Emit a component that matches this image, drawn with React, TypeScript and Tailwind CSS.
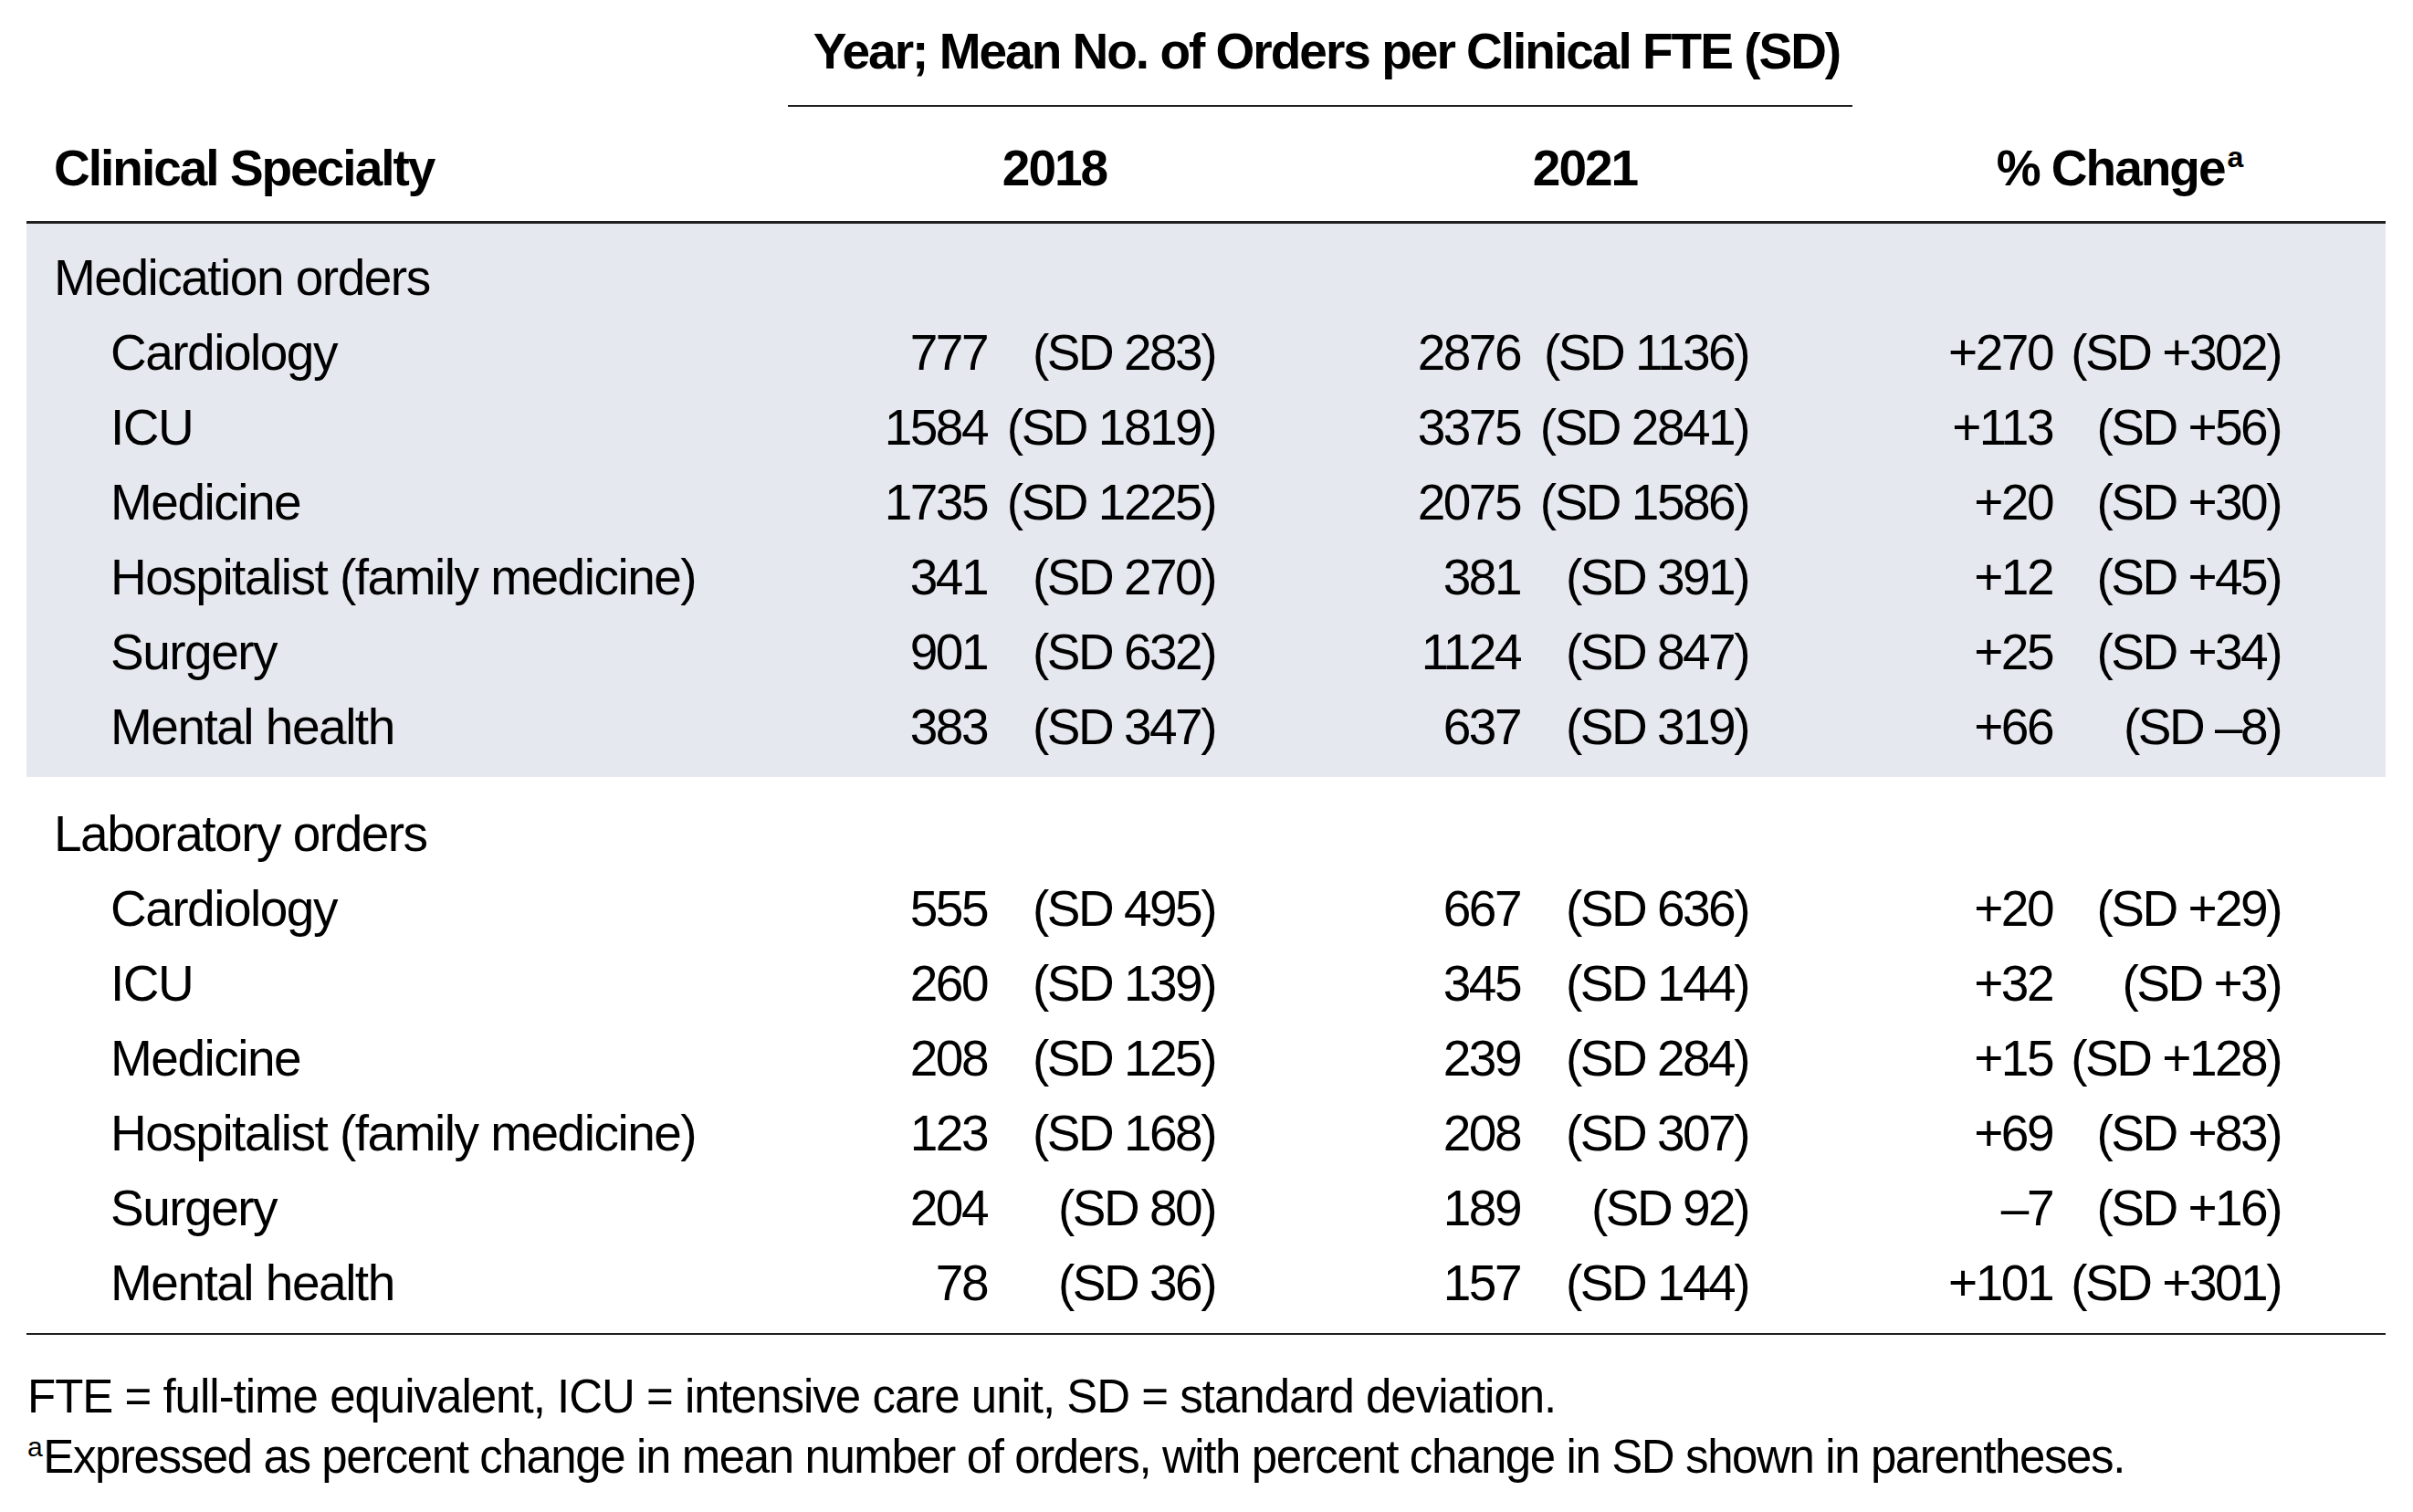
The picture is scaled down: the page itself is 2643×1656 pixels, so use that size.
import React from "react";

type Row = [string, string, string, string, string, string, string];

const med: Row[] = [
  ["Cardiology", "777", "(SD 283)", "2876", "(SD 1136)", "+270", "(SD +302)"],
  ["ICU", "1584", "(SD 1819)", "3375", "(SD 2841)", "+113", "(SD +56)"],
  ["Medicine", "1735", "(SD 1225)", "2075", "(SD 1586)", "+20", "(SD +30)"],
  ["Hospitalist (family medicine)", "341", "(SD 270)", "381", "(SD 391)", "+12", "(SD +45)"],
  ["Surgery", "901", "(SD 632)", "1124", "(SD 847)", "+25", "(SD +34)"],
  ["Mental health", "383", "(SD 347)", "637", "(SD 319)", "+66", "(SD \u20138)"],
];

const lab: Row[] = [
  ["Cardiology", "555", "(SD 495)", "667", "(SD 636)", "+20", "(SD +29)"],
  ["ICU", "260", "(SD 139)", "345", "(SD 144)", "+32", "(SD +3)"],
  ["Medicine", "208", "(SD 125)", "239", "(SD 284)", "+15", "(SD +128)"],
  ["Hospitalist (family medicine)", "123", "(SD 168)", "208", "(SD 307)", "+69", "(SD +83)"],
  ["Surgery", "204", "(SD 80)", "189", "(SD 92)", "\u20137", "(SD +16)"],
  ["Mental health", "78", "(SD 36)", "157", "(SD 144)", "+101", "(SD +301)"],
];

function DataRow({ r }: { r: Row }) {
  return (
    <div className="flex h-[82px] leading-[82px] whitespace-nowrap">
      <div className="w-[871px] pl-[92px]">{r[0]}</div>
      <div className="w-[183px] text-right tracking-[-2.5px] pr-[2px]">{r[1]}</div>
      <div className="w-[250px] text-right tracking-[-2.5px] pr-[2px]">{r[2]}</div>
      <div className="w-[334px] text-right tracking-[-2.5px] pr-[2px]">{r[3]}</div>
      <div className="w-[250px] text-right tracking-[-2.5px] pr-[2px]">{r[4]}</div>
      <div className="w-[333px] text-right tracking-[-2.5px] pr-[2px]">{r[5]}</div>
      <div className="w-[250px] text-right tracking-[-2.5px] pr-[2px]">{r[6]}</div>
    </div>
  );
}

function Section({ title, rows, shaded }: { title: string; rows: Row[]; shaded?: boolean }) {
  return (
    <div className={(shaded ? "bg-[#e5e8ee] pt-[18px] " : "pt-[21px] ") + "pb-[14px]"}>
      <div className="h-[82px] leading-[82px] pl-[30px] whitespace-nowrap">{title}</div>
      {rows.map((r, i) => (
        <DataRow key={i} r={r} />
      ))}
    </div>
  );
}

export default function App() {
  return (
    <div className="min-h-screen w-full bg-white text-black font-['Liberation_Sans',Arial,sans-serif]">
      <div className="pl-[29px] w-[2613px]">
        <div className="w-[2584px] text-[55px] tracking-[-1.5px]">
          {/* Title */}
          <div className="pt-[15px]">
            <div className="ml-[834px] w-[1166px]">
              <div className="h-[82px] leading-[82px] text-center pl-[14px] font-bold tracking-[-2px] whitespace-nowrap">
                Year; Mean No. of Orders per Clinical FTE (SD)
              </div>
              <div className="mt-[18px] h-[2px] bg-[#1f1f1f]" />
            </div>
          </div>
          {/* Column headers */}
          <div className="mt-[26px] flex h-[82px] leading-[82px] font-bold tracking-[-2px] whitespace-nowrap">
            <div className="w-[944px] pl-[30px]">Clinical Specialty</div>
            <div className="w-[364px] text-center">2018</div>
            <div className="w-[798px] text-center">2021</div>
            <div className="w-[372px] text-center">
              % Change<span className="text-[32px] relative -top-[20px] ml-[3px] font-bold">a</span>
            </div>
          </div>
          <div className="mt-[17px] h-[3px] bg-[#1f1f1f]" />
          <Section title="Medication orders" rows={med} shaded />
          <Section title="Laboratory orders" rows={lab} />
          <div className="h-[2px] bg-[#1f1f1f]" />
        </div>
        {/* Footnotes */}
        <div className="pt-[35px] pl-[1px] text-[51px] tracking-[-1px] leading-[66px] whitespace-nowrap">
          <div>FTE = full-time equivalent, ICU = intensive care unit, SD = standard deviation.</div>
          <div className="tracking-[-1.4px]">
            <span className="text-[30px] relative -top-[18px] mr-[2px]">a</span>Expressed as percent change in mean number of orders, with percent change in SD shown in parentheses.
          </div>
        </div>
      </div>
    </div>
  );
}
